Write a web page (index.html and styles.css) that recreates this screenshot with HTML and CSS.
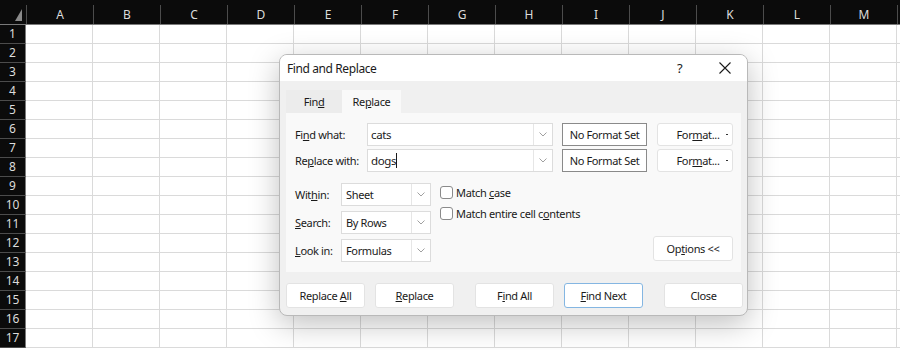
FILE: index.html
```html
<!DOCTYPE html>
<html>
<head>
  <title>Find and Replace</title>
  <link rel="stylesheet" href="styles.css">
</head>
<body>
  <div class="sheet">
    <div class="head-row">
      <div class="corner">
        <svg width="26" height="24" viewBox="0 0 26 24"><polygon points="22,9 22,21 15,21" fill="#8a8a8a"/></svg>
      </div>
      <div class="col-head">A</div>
      <div class="col-head">B</div>
      <div class="col-head">C</div>
      <div class="col-head">D</div>
      <div class="col-head">E</div>
      <div class="col-head">F</div>
      <div class="col-head">G</div>
      <div class="col-head">H</div>
      <div class="col-head">I</div>
      <div class="col-head">J</div>
      <div class="col-head">K</div>
      <div class="col-head">L</div>
      <div class="col-head">M</div>
      <div class="col-head last"></div>
    </div>
    <div class="row"><div class="row-head">1</div><div class="cells"></div></div>
    <div class="row"><div class="row-head">2</div><div class="cells"></div></div>
    <div class="row"><div class="row-head">3</div><div class="cells"></div></div>
    <div class="row"><div class="row-head">4</div><div class="cells"></div></div>
    <div class="row"><div class="row-head">5</div><div class="cells"></div></div>
    <div class="row"><div class="row-head">6</div><div class="cells"></div></div>
    <div class="row"><div class="row-head">7</div><div class="cells"></div></div>
    <div class="row"><div class="row-head">8</div><div class="cells"></div></div>
    <div class="row"><div class="row-head">9</div><div class="cells"></div></div>
    <div class="row"><div class="row-head">10</div><div class="cells"></div></div>
    <div class="row"><div class="row-head">11</div><div class="cells"></div></div>
    <div class="row"><div class="row-head">12</div><div class="cells"></div></div>
    <div class="row"><div class="row-head">13</div><div class="cells"></div></div>
    <div class="row"><div class="row-head">14</div><div class="cells"></div></div>
    <div class="row"><div class="row-head">15</div><div class="cells"></div></div>
    <div class="row"><div class="row-head">16</div><div class="cells"></div></div>
    <div class="row"><div class="row-head">17</div><div class="cells"></div></div>
  </div>

  <div class="dialog">
    <div class="title-bar">
      <div class="title">Find and Replace</div>
      <div class="title-help">?</div>
      <div class="title-close">
        <svg width="12" height="12" viewBox="0 0 12 12"><path d="M0.5 0.5 L11.5 11.5 M11.5 0.5 L0.5 11.5" stroke="#1a1a1a" stroke-width="1.1" fill="none"/></svg>
      </div>
    </div>

    <div class="dialog-body">
      <div class="tabs">
        <div class="tab">Fin<u>d</u></div>
        <div class="tab active">Re<u>p</u>lace</div>
      </div>

      <div class="panel">
        <div class="field-row">
          <div class="label">Fi<u>n</u>d what:</div>
          <div class="combo">
            <div class="combo-text">cats</div>
            <div class="combo-arrow"><svg width="8" height="5" viewBox="0 0 8 5"><polyline points="0.5,0.5 4,4 7.5,0.5" stroke="#a0a0a0" fill="none"/></svg></div>
          </div>
          <div class="format-set">No Format Set</div>
          <div class="btn format-btn">For<u>m</u>at... <span class="drop-dot"></span></div>
        </div>
        <div class="field-row">
          <div class="label">Re<u>p</u>lace with:</div>
          <div class="combo">
            <div class="combo-text">dogs<span class="caret"></span></div>
            <div class="combo-arrow"><svg width="8" height="5" viewBox="0 0 8 5"><polyline points="0.5,0.5 4,4 7.5,0.5" stroke="#a0a0a0" fill="none"/></svg></div>
          </div>
          <div class="format-set">No Format Set</div>
          <div class="btn format-btn">For<u>m</u>at... <span class="drop-dot"></span></div>
        </div>

        <div class="options">
          <div class="selects">
            <div class="select-row">
              <div class="small-label">Wit<u>h</u>in:</div>
              <div class="select">
                <div class="select-text">Sheet</div>
                <div class="select-arrow"><svg width="8" height="5" viewBox="0 0 8 5"><polyline points="0.5,0.5 4,4 7.5,0.5" stroke="#a0a0a0" fill="none"/></svg></div>
              </div>
            </div>
            <div class="select-row">
              <div class="small-label"><u>S</u>earch:</div>
              <div class="select">
                <div class="select-text">By Rows</div>
                <div class="select-arrow"><svg width="8" height="5" viewBox="0 0 8 5"><polyline points="0.5,0.5 4,4 7.5,0.5" stroke="#a0a0a0" fill="none"/></svg></div>
              </div>
            </div>
            <div class="select-row">
              <div class="small-label"><u>L</u>ook in:</div>
              <div class="select">
                <div class="select-text">Formulas</div>
                <div class="select-arrow"><svg width="8" height="5" viewBox="0 0 8 5"><polyline points="0.5,0.5 4,4 7.5,0.5" stroke="#a0a0a0" fill="none"/></svg></div>
              </div>
            </div>
          </div>

          <div class="checks">
            <div class="check-row"><span class="checkbox"></span><span>Match <u>c</u>ase</span></div>
            <div class="check-row"><span class="checkbox"></span><span>Match entire cell c<u>o</u>ntents</span></div>
          </div>

          <div class="btn options-btn">Op<u>t</u>ions &lt;&lt;</div>
        </div>
      </div>

      <div class="actions">
        <div class="btn action">Replace <u>A</u>ll</div>
        <div class="btn action"><u>R</u>eplace</div>
        <div class="btn action group-start">F<u>i</u>nd All</div>
        <div class="btn action primary"><u>F</u>ind Next</div>
        <div class="btn action group-start">Close</div>
      </div>
    </div>
  </div>
</body>
</html>
```

FILE: styles.css
```css
* {
  box-sizing: border-box;
}
body {
  margin: 0;
  width: 900px;
  height: 350px;
  overflow: hidden;
  background-color: white;
  font-family: "Noto Sans", "Open Sans", sans-serif;
  position: relative;
}

/* spreadsheet */
.sheet {
  width: 900px;
  overflow: hidden;
}
.head-row {
  display: flex;
  height: 25px;
  background-color: #0b0b0b;
  border-bottom: 1px solid #7a7a7a;
}
.corner {
  width: 26px;
  flex-shrink: 0;
}
.corner svg {
  display: block;
}
.col-head {
  width: 67px;
  flex-shrink: 0;
  margin-top: 5px;
  height: 19px;
  line-height: 19px;
  text-align: center;
  font-size: 12px;
  color: #dcdcdc;
  border-left: 1px solid #4c4c4c;
}
.col-head.last {
  width: 4px;
}
.row {
  display: flex;
  height: 19px;
}
.row-head {
  width: 26px;
  flex-shrink: 0;
  background-color: #0b0b0b;
  color: #dcdcdc;
  font-size: 12px;
  line-height: 18px;
  text-align: center;
  border-right: 1px solid #7a7a7a;
  border-bottom: 1px solid #4c4c4c;
}
.cells {
  flex: 1;
  border-bottom: 1px solid #dadada;
  background-image: repeating-linear-gradient(to right, transparent 0 66px, #dadada 66px 67px);
}

/* dialog */
.dialog {
  position: absolute;
  left: 279px;
  top: 54px;
  width: 469px;
  height: 262px;
  background-color: #f0f0f0;
  border: 1px solid #b9b9b9;
  border-radius: 8px;
  box-shadow: 0 8px 30px rgba(0, 0, 0, 0.25);
  overflow: hidden;
  font-size: 11px;
  letter-spacing: -0.35px;
  color: #1a1a1a;
}
.title-bar {
  display: flex;
  align-items: center;
  height: 26px;
  background-color: white;
  padding-left: 7px;
}
.title {
  flex: 1;
  font-size: 12px;
  letter-spacing: -0.4px;
}
.title-help {
  font-size: 13px;
  width: 12px;
  margin-right: 30px;
}
.title-close {
  margin-right: 16px;
  height: 12px;
}
.title-close svg {
  display: block;
}
.dialog-body {
  padding: 9px 5px 0 6px;
}
.tabs {
  display: flex;
  height: 23px;
}
.tab {
  width: 56px;
  text-align: center;
  line-height: 23px;
  background-color: #ececec;
}
.tab.active {
  width: 59px;
  background-color: #f9f9f9;
}
.panel {
  width: 455px;
  height: 159px;
  background-color: #f9f9f9;
  padding: 10px 8px 0 9px;
}
.field-row {
  display: flex;
  align-items: center;
  height: 23px;
  margin-bottom: 3px;
}
.label {
  width: 72px;
}
.combo {
  display: flex;
  width: 186px;
  height: 23px;
  background-color: white;
  border: 1px solid #dcdcdc;
}
.combo-text {
  flex: 1;
  padding-left: 3px;
  line-height: 21px;
  font-size: 11.5px;
}
.caret {
  display: inline-block;
  width: 1px;
  height: 15px;
  background-color: #1a1a1a;
  vertical-align: -3px;
}
.combo-arrow, .select-arrow {
  width: 19px;
  border-left: 1px solid #e6e6e6;
  display: flex;
  align-items: center;
  justify-content: center;
}
.format-set {
  width: 85px;
  height: 23px;
  margin-left: 9px;
  border: 1px solid #8a8a8a;
  background-color: white;
  text-align: center;
  line-height: 21px;
}
.btn {
  background-color: white;
  border: 1px solid #e3e3e3;
  border-radius: 3px;
  text-align: center;
}
.format-btn {
  width: 76px;
  height: 23px;
  margin-left: 10px;
  line-height: 21px;
  position: relative;
  padding-left: 6px;
}
.drop-dot {
  position: absolute;
  right: 4px;
  top: 10px;
  width: 2px;
  height: 1px;
  background-color: #333;
}
.options {
  display: flex;
  align-items: flex-start;
  margin-top: 11px;
}
.select-row {
  display: flex;
  align-items: center;
  height: 23px;
  margin-bottom: 5px;
}
.small-label {
  width: 46px;
}
.select {
  display: flex;
  width: 90px;
  height: 23px;
  background-color: white;
  border: 1px solid #dcdcdc;
}
.select-text {
  flex: 1;
  padding-left: 4px;
  line-height: 21px;
}
.checks {
  margin-left: 9px;
  padding-top: 3px;
}
.check-row {
  display: flex;
  align-items: center;
  height: 13px;
  margin-bottom: 8px;
}
.checkbox {
  width: 13px;
  height: 13px;
  border: 1px solid #8a8a8a;
  border-radius: 3px;
  background-color: white;
  margin-right: 3px;
}
.options-btn {
  width: 80px;
  height: 25px;
  line-height: 23px;
  margin-left: auto;
  margin-top: 53px;
}
.actions {
  display: flex;
  margin-top: 11px;
}
.action {
  width: 79px;
  flex-shrink: 0;
  height: 25px;
  line-height: 23px;
  margin-right: 10px;
}
.action:last-child {
  margin-right: 0;
}
.action.group-start {
  margin-left: 11px;
}
.action.primary {
  border-color: #84b6e2;
}
```
